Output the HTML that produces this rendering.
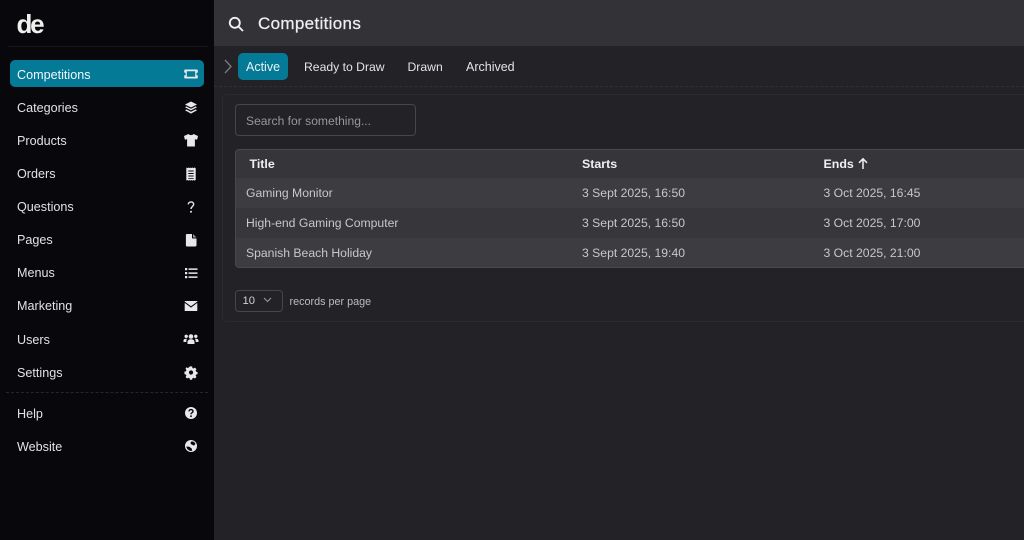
<!DOCTYPE html>
<html lang="en"><head><meta charset="utf-8"><title>Competitions</title>
<style>
*{box-sizing:border-box;margin:0;padding:0}
html,body{width:1024px;height:540px;overflow:hidden;background:#222227;font-family:"Liberation Sans",sans-serif;color:#e4e4e6}
.abs,.t,.ic{position:absolute}
.t{white-space:nowrap;font-size:13px;line-height:16px}
#side{position:absolute;left:0;top:0;width:214px;height:540px;background:#08080c}
.nav{left:17px;color:#e2e2e4;font-size:12.6px}
.ic{left:182.500px;width:16px;height:16px;fill:#e8e8ea}
.row{position:absolute;left:236px;width:800px;height:30px}
.c{color:#c8c8cb;font-size:12.2px}
.h{font-weight:700;color:#f0f0f1;font-size:12.4px}
</style></head><body>
<div id="side">
<div class="abs" style="left:8px;top:46px;width:200px;height:1px;background:#17171b"></div>
<div class="abs" style="left:16.500px;top:11px;font-size:26px;font-weight:700;letter-spacing:-2.200px;color:#efeff0;line-height:27px">de</div>
<div class="abs" style="left:10px;top:60px;width:194px;height:27px;border-radius:5px;background:#047a96"></div>
<div class="t nav" style="top:67px;color:#f2f8fa">Competitions</div>
<div class="t nav" style="top:100px">Categories</div>
<div class="t nav" style="top:133px">Products</div>
<div class="t nav" style="top:166px">Orders</div>
<div class="t nav" style="top:199px">Questions</div>
<div class="t nav" style="top:232px">Pages</div>
<div class="t nav" style="top:265px">Menus</div>
<div class="t nav" style="top:298px">Marketing</div>
<div class="t nav" style="top:332px">Users</div>
<div class="t nav" style="top:365px">Settings</div>
<div class="abs" style="left:6px;top:392px;width:202px;border-top:1px dashed #26262b"></div>
<div class="t nav" style="top:406px">Help</div>
<div class="t nav" style="top:439px">Website</div>
<svg class="ic" style="top:66px" viewBox="0 0 16 16"><path fill-rule="evenodd" d="M2.200 3.500h11.600a1 1 0 0 1 1 1v2a1.500 1.500 0 0 0 0 3v2a1 1 0 0 1-1 1H2.200a1 1 0 0 1-1-1v-2a1.500 1.500 0 0 0 0-3v-2a1 1 0 0 1 1-1zM3.800 5.300v5.400h8.400V5.300z"/></svg>
<svg class="ic" style="top:99.500px" viewBox="0 0 16 16"><path d="M8 1.500l6 3-6 3-6-3z"/><path d="M3.300 6.400L8 8.700l4.700-2.300 1.300.9-6 3.100-6-3.100z"/><path d="M3.300 9.400L8 11.700l4.700-2.300 1.300.9-6 3.300-6-3.300z"/></svg>
<svg class="ic" style="top:132px" viewBox="0 0 16 16"><path d="M5.500 2C6.500 3.500 9.500 3.500 10.500 2L15 4l-.9 3.800-2.200-.7V14.500H4.100V7.100l-2.200.7L1 4z"/></svg>
<svg class="ic" style="top:165.500px" viewBox="0 0 16 16"><path fill-rule="evenodd" d="M3.300 1.500l1 .6 1-.6 1 .6 1.100-.6 1 .6 1-.6 1 .6 1-.6 1.300.6V14l-1.300.6-1-.6-1 .6-1-.6-1.100.6-1-.6-1 .6-1-.6-1 .6zM5.300 4.500v1h5.400v-1zM5.300 7v1h5.400V7zM5.300 9.500v1h5.400v-1zM5.300 12v.7h5.400V12z"/></svg>
<svg class="ic" style="top:198.500px" viewBox="0 0 16 16"><path fill="none" stroke="#e8e8ea" stroke-width="1.400" d="M5.300 5.400C5.300 2.200 10.700 2.200 10.700 5.300 10.700 7.400 8 7.500 8 10"/><circle cx="8" cy="12.800" r="1"/></svg>
<svg class="ic" style="top:231.500px" viewBox="0 0 16 16"><path d="M4 2h5v3.800a.7.7 0 0 0 .7.7h3.800V13a1.500 1.500 0 0 1-1.500 1.500H4A1.300 1.300 0 0 1 2.900 13V3A1 1 0 0 1 4 2z"/><path d="M10 2l3.500 3.500H10z" fill="#9a9a9d"/></svg>
<svg class="ic" style="top:264.500px" viewBox="0 0 16 16"><path d="M2 3h2.200v2.200H2zM2 7h2.200v2.200H2zM2 11h2.200v2.200H2zM5.500 3.400h9v1.500h-9zM5.500 7.400h9v1.500h-9zM5.500 11.400h9v1.500h-9z"/></svg>
<svg class="ic" style="top:298px" viewBox="0 0 16 16"><path d="M1.700 3h12.600v.6L8 8.300 1.700 3.600z"/><path d="M1.700 4.900L8 9.600l6.300-4.700V13H1.700z"/></svg>
<svg class="ic" style="top:331px" viewBox="0 0 16 16"><circle cx="8" cy="5.500" r="2.300"/><circle cx="3.200" cy="5.300" r="1.700"/><circle cx="12.800" cy="5.300" r="1.700"/><path d="M4.500 13v-2c0-1.800 1.500-2.800 3.500-2.800s3.500 1 3.500 2.800v2zM.5 11V9.500C.5 8 2 7.600 4.200 7.800 3.500 8.500 3.300 9.500 3.300 11zM15.500 11V9.500c0-1.500-1.500-1.900-3.700-1.700.7.700.9 1.700.9 3.200z"/></svg>
<svg class="ic" style="top:363.500px" viewBox="0 0 16 16"><path fill-rule="evenodd" d="M6.700 1.500h2.600l.4 1.900 1.300.6 1.700-1 1.800 1.900-1 1.600.5 1.300 1.800.5v2.500l-1.800.5-.5 1.300 1 1.600-1.800 1.800-1.700-1-1.300.6-.4 1.800H6.700l-.4-1.800-1.300-.6-1.700 1-1.800-1.800 1-1.600-.5-1.300-1.800-.5V7.800l1.800-.5.5-1.300-1-1.600L2.300 2.500l1.700 1 1.300-.6zM8 6.300a2.500 2.500 0 1 0 0 5 2.500 2.500 0 0 0 0-5z" transform="translate(1.300 1.100) scale(.84)"/></svg>
<svg class="ic" style="top:405px" viewBox="0 0 16 16"><circle cx="8" cy="8" r="6"/><path fill="none" stroke="#08080c" stroke-width="1.400" d="M6 6.400C6 4 10 4 10 6.300 10 7.700 8 7.800 8 9.300"/><circle cx="8" cy="11.200" r=".9" fill="#08080c"/></svg>
<svg class="ic" style="top:438px" viewBox="0 0 16 16"><circle cx="8" cy="8" r="6"/><path fill="#08080c" d="M8.500 3.400c2.200 0 3.400 1.100 3.900 2.600L11 7.600 8.500 6.500 7.300 5zM3.300 8.500l3 .3 2.400 1.700.5 2.300c-2.800.6-5.400-1.400-5.900-4.300z"/></svg>
</div>

<div class="abs" style="left:214px;top:0;width:810px;height:46px;background:#323237"></div>
<svg class="abs" style="left:227px;top:15px" width="18" height="18" viewBox="0 0 18 18" fill="none" stroke="#f0f0f1" stroke-width="1.900"><circle cx="7.800" cy="7.800" r="5"/><path d="M11.500 11.500L16 16"/></svg>
<div class="t" style="left:258px;top:14px;font-size:17px;line-height:20px;color:#eeeeef;letter-spacing:.33px;-webkit-text-stroke:.25px #eeeeef">Competitions</div>

<svg class="abs" style="left:223px;top:59px" width="10" height="15" viewBox="0 0 10 15" fill="none" stroke="#77777c" stroke-width="1.400"><path d="M2 1l6 6.500-6 6.500"/></svg>
<div class="abs" style="left:238px;top:53px;width:50px;height:27px;border-radius:5px;background:#047a96"></div>
<div class="t" style="left:246px;top:59px;color:#e6f2f5;font-size:12.500px">Active</div>
<div class="t" style="left:304px;top:59px;font-size:12.200px">Ready to Draw</div>
<div class="t" style="left:407.500px;top:59px;font-size:12.200px">Drawn</div>
<div class="t" style="left:466px;top:59px;font-size:12.500px">Archived</div>
<div class="abs" style="left:214px;top:86px;width:810px;border-top:1px dashed #303035"></div>

<div class="abs" style="left:222px;top:94px;width:830px;height:228px;border:1px solid #2b2b30;border-radius:5px"></div>
<div class="abs" style="left:235px;top:104px;width:181px;height:32px;border:1px solid #45454a;border-radius:4px"></div>
<div class="t" style="left:246px;top:113px;color:#97979b;font-size:12.100px">Search for something...</div>

<div class="abs" style="left:235px;top:149px;width:810px;height:119px;border:1px solid #48484d;border-radius:4px;background:#35353a;overflow:hidden"></div>
<div class="row" style="top:178px;height:30px;background:#3c3c41"></div>
<div class="row" style="top:208px;height:30px;background:#36363b"></div>
<div class="row" style="top:238px;height:29px;background:#3c3c41;border-radius:0 0 0 4px"></div>
<div class="t h" style="left:249.500px;top:156px">Title</div>
<div class="t h" style="left:582px;top:156px">Starts</div>
<div class="t h" style="left:823.500px;top:156px">Ends</div>
<svg class="abs" style="left:857px;top:157px" width="12" height="13" viewBox="0 0 12 13" fill="none" stroke="#f0f0f1" stroke-width="1.500"><path d="M6 12V2M2 5.800L6 1.800l4 4"/></svg>
<div class="t c" style="left:246px;top:185px">Gaming Monitor</div>
<div class="t c" style="left:582px;top:185px">3 Sept 2025, 16:50</div>
<div class="t c" style="left:823.500px;top:185px">3 Oct 2025, 16:45</div>
<div class="t c" style="left:246px;top:215px">High-end Gaming Computer</div>
<div class="t c" style="left:582px;top:215px">3 Sept 2025, 16:50</div>
<div class="t c" style="left:823.500px;top:215px">3 Oct 2025, 17:00</div>
<div class="t c" style="left:246px;top:245px">Spanish Beach Holiday</div>
<div class="t c" style="left:582px;top:245px">3 Sept 2025, 19:40</div>
<div class="t c" style="left:823.500px;top:245px">3 Oct 2025, 21:00</div>

<div class="abs" style="left:235px;top:290px;width:48px;height:22px;border:1px solid #45454a;border-radius:4px"></div>
<div class="t" style="left:242.500px;top:293px;font-size:11.200px;color:#d2d2d5">10</div>
<svg class="abs" style="left:263px;top:297px" width="9" height="6" viewBox="0 0 9 6" fill="none" stroke="#9a9a9e" stroke-width="1.100"><path d="M1 1l3.500 3.500L8 1"/></svg>
<div class="t" style="left:289.500px;top:294px;font-size:10.800px;color:#bcbcc0">records per page</div>
</body></html>
